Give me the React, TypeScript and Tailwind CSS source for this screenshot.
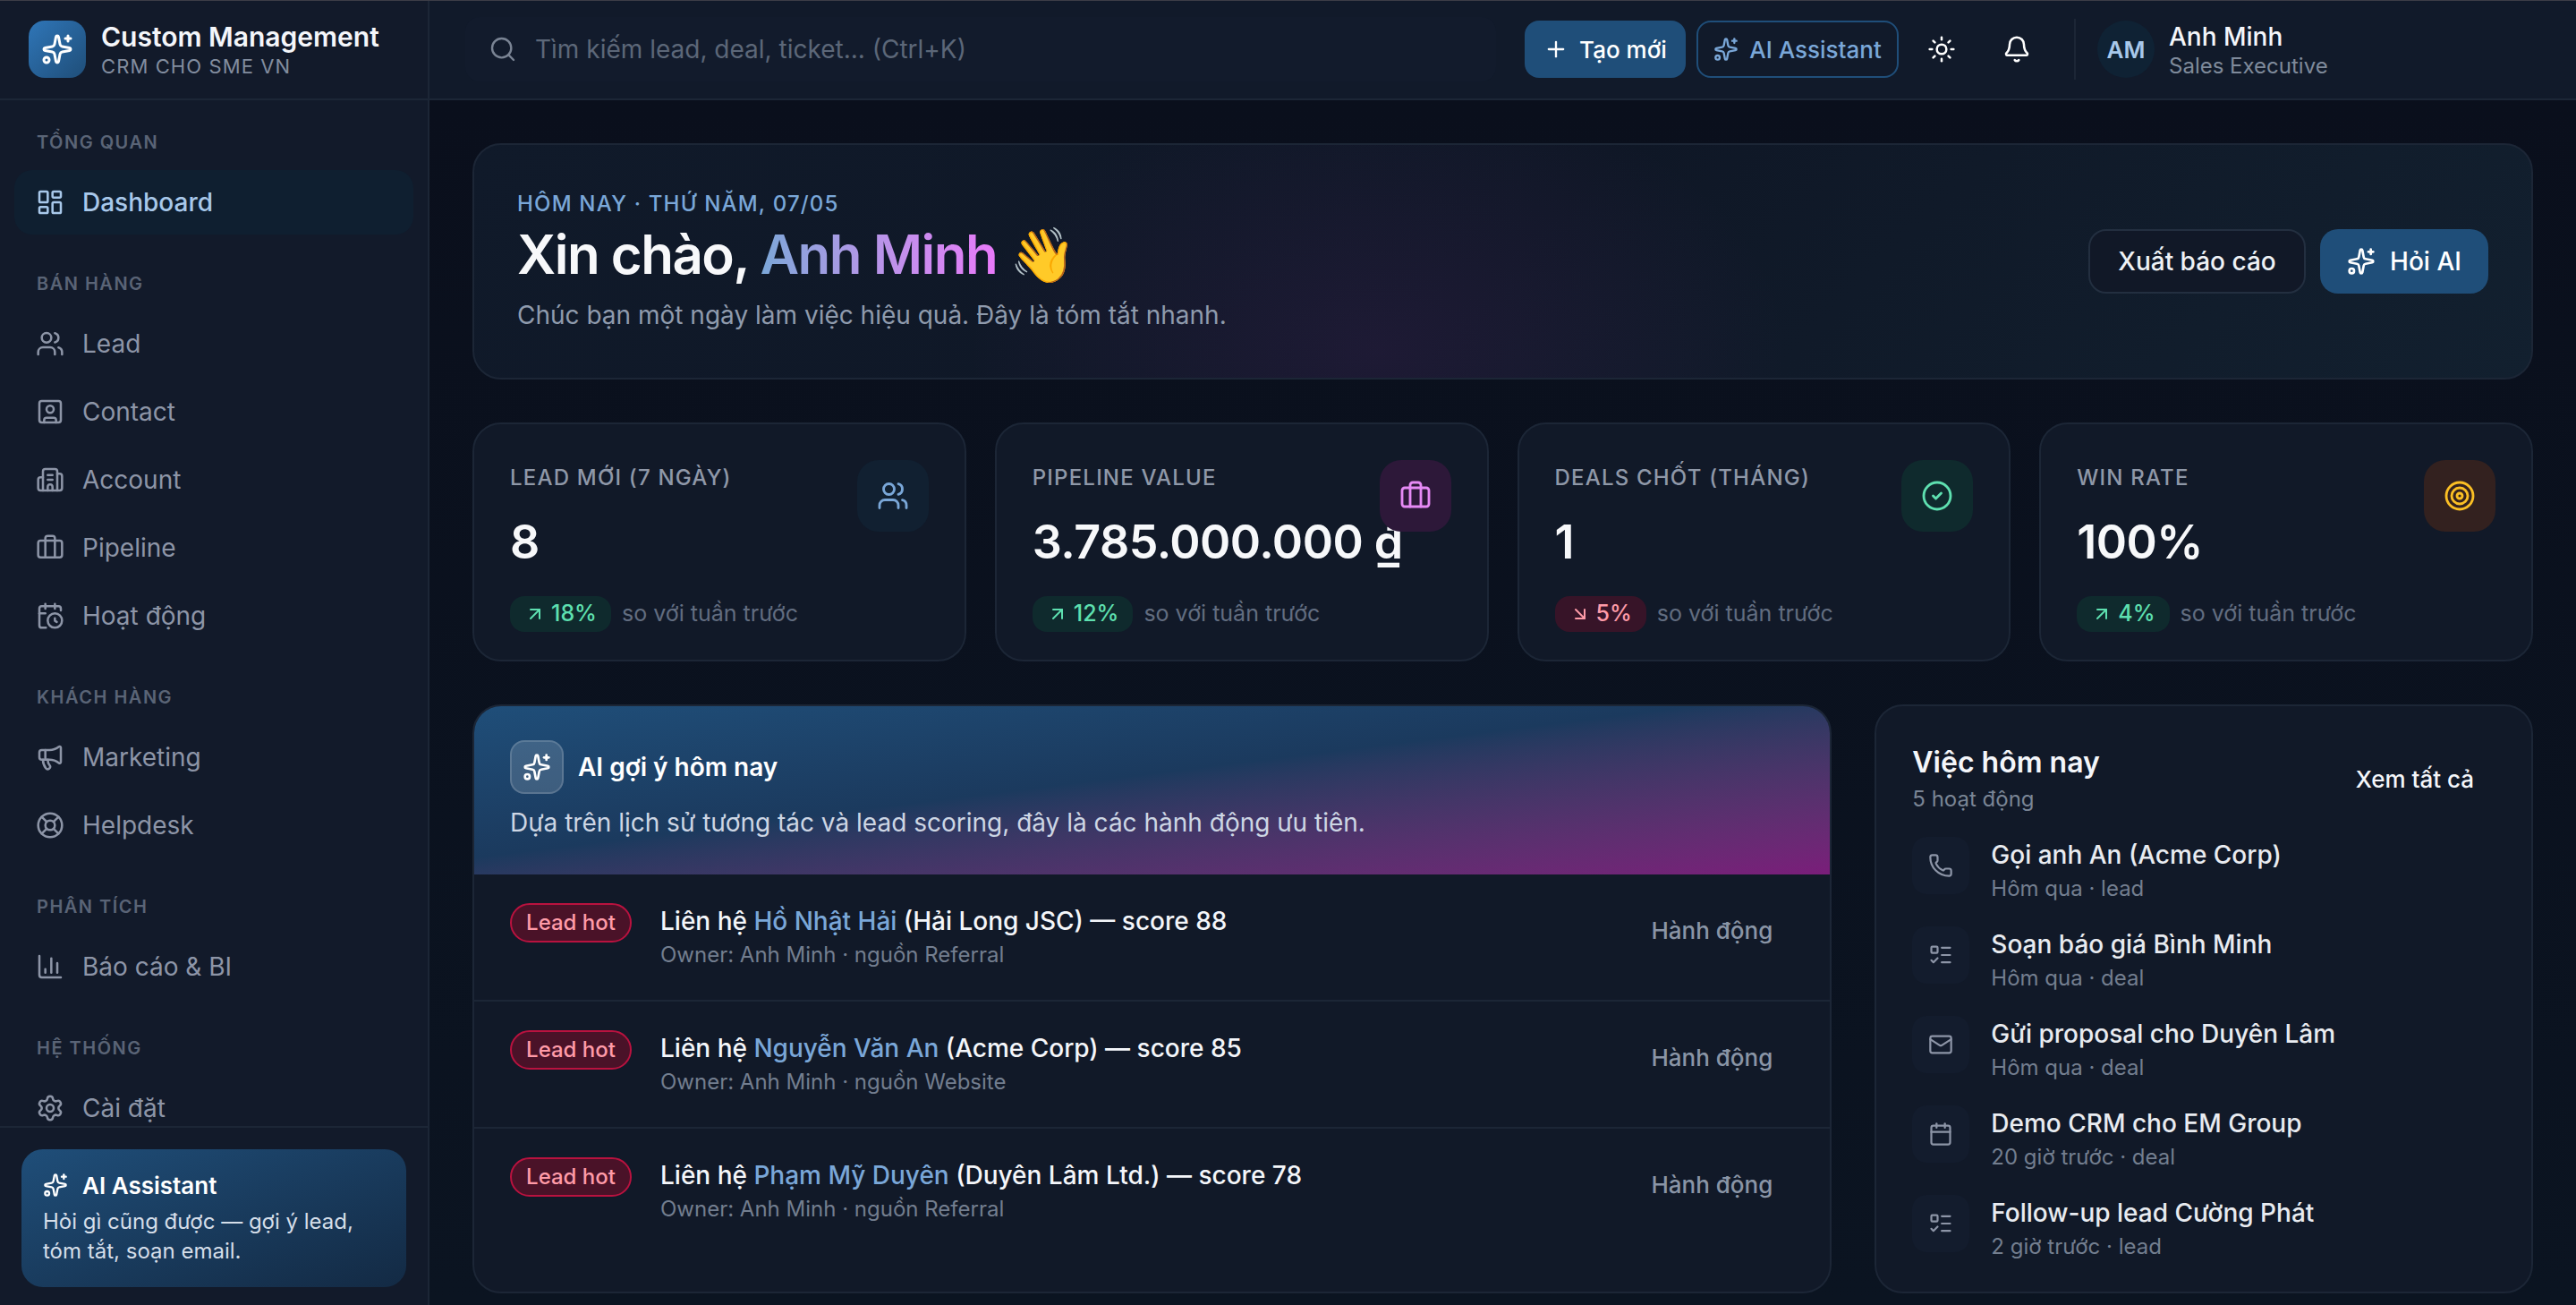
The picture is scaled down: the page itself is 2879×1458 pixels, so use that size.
import {
  ArrowDownRight,
  ArrowUpRight,
  Bell,
  Briefcase,
  Building2,
  Calendar,
  CalendarClock,
  ChartColumn,
  CircleCheck,
  LayoutDashboard,
  LifeBuoy,
  ListTodo,
  Mail,
  Megaphone,
  Phone,
  Plus,
  Search,
  Settings,
  Sparkles,
  SquareUser,
  Sun,
  Target,
  Users,
} from 'lucide-react';

const scrollbar =
  '[&::-webkit-scrollbar]:w-5 [&::-webkit-scrollbar-track]:bg-transparent [&::-webkit-scrollbar-thumb]:rounded-full [&::-webkit-scrollbar-thumb]:border-4 [&::-webkit-scrollbar-thumb]:border-solid [&::-webkit-scrollbar-thumb]:border-transparent [&::-webkit-scrollbar-thumb]:bg-[#263850] [&::-webkit-scrollbar-thumb]:bg-clip-padding';

const navGroups = [
  { label: 'Tổng quan', items: [{ name: 'Dashboard', icon: LayoutDashboard, active: true }] },
  {
    label: 'Bán hàng',
    items: [
      { name: 'Lead', icon: Users },
      { name: 'Contact', icon: SquareUser },
      { name: 'Account', icon: Building2 },
      { name: 'Pipeline', icon: Briefcase },
      { name: 'Hoạt động', icon: CalendarClock },
    ],
  },
  {
    label: 'Khách hàng',
    items: [
      { name: 'Marketing', icon: Megaphone },
      { name: 'Helpdesk', icon: LifeBuoy },
    ],
  },
  { label: 'Phân tích', items: [{ name: 'Báo cáo & BI', icon: ChartColumn }] },
  { label: 'Hệ thống', items: [{ name: 'Cài đặt', icon: Settings }] },
];

const stats = [
  { label: 'Lead mới (7 ngày)', value: '8', delta: '18%', up: true, icon: Users, box: 'bg-[#112031] text-[#7aa7d8]' },
  { label: 'Pipeline value', value: '3.785.000.000 ₫', delta: '12%', up: true, icon: Briefcase, box: 'bg-[#2d1839] text-[#e68af5]' },
  { label: 'Deals chốt (tháng)', value: '1', delta: '5%', up: false, icon: CircleCheck, box: 'bg-[#0f2a2d] text-[#5ee0b0]' },
  { label: 'Win rate', value: '100%', delta: '4%', up: true, icon: Target, box: 'bg-[#33211f] text-[#fbbf24]' },
];

const suggestions = [
  { name: 'Hồ Nhật Hải', company: '(Hải Long JSC) — score 88', source: 'Referral' },
  { name: 'Nguyễn Văn An', company: '(Acme Corp) — score 85', source: 'Website' },
  { name: 'Phạm Mỹ Duyên', company: '(Duyên Lâm Ltd.) — score 78', source: 'Referral' },
];

const tasks = [
  { title: 'Gọi anh An (Acme Corp)', meta: 'Hôm qua · lead', icon: Phone },
  { title: 'Soạn báo giá Bình Minh', meta: 'Hôm qua · deal', icon: ListTodo },
  { title: 'Gửi proposal cho Duyên Lâm', meta: 'Hôm qua · deal', icon: Mail },
  { title: 'Demo CRM cho EM Group', meta: '20 giờ trước · deal', icon: Calendar },
  { title: 'Follow-up lead Cường Phát', meta: '2 giờ trước · lead', icon: ListTodo },
];

function Sidebar() {
  return (
    <aside className="flex h-full w-[480px] shrink-0 flex-col border-r-2 border-[#1c2636] bg-[#121a2a]">
      <div className="flex h-[112px] shrink-0 items-center gap-[17px] border-b-2 border-[#1c2636] px-8">
        <div className="flex h-16 w-16 items-center justify-center rounded-[18px] bg-linear-to-br from-[#2f76b8] to-[#1f4e79]">
          <Sparkles size={36} strokeWidth={2} className="text-white" />
        </div>
        <div>
          <div className="text-[30px] leading-[38px] font-semibold text-[#f4f6fa]">Custom Management</div>
          <div className="text-[22px] leading-[28px] tracking-[1.1px] text-[#828d9f]">CRM CHO SME VN</div>
        </div>
      </div>

      <nav className={`min-h-0 flex-1 overflow-y-scroll px-4 pt-8 pb-6 ${scrollbar}`}>
        {navGroups.map((group, i) => (
          <div key={group.label} className={i > 0 ? 'mt-10' : ''}>
            <div className="mb-4 px-[25px] text-[20px] leading-[30px] font-semibold tracking-[1.5px] text-[#5a6476] uppercase">
              {group.label}
            </div>
            <div className="flex flex-col gap-1">
              {group.items.map((item) => (
                <div
                  key={item.name}
                  className={`flex h-[72px] items-center gap-5 rounded-[20px] px-6 text-[28px] ${
                    'active' in item ? 'bg-[#0f1f30] font-medium text-[#a8c8ea]' : 'text-[#8d95a7]'
                  }`}
                >
                  <item.icon size={32} strokeWidth={1.9} className="shrink-0" />
                  {item.name}
                </div>
              ))}
            </div>
          </div>
        ))}
      </nav>

      <div className="shrink-0 border-t-2 border-[#1c2636] px-6 pt-6 pb-5">
        <div className="h-[154px] rounded-[24px] bg-linear-to-br from-[#1f4e79] to-[#132a44] p-6">
          <div className="flex h-8 items-center gap-4 text-[26px] font-semibold text-white">
            <Sparkles size={28} />
            AI Assistant
          </div>
          <p className="mt-2 text-[24px] leading-[33px] text-[#d5dee9]">
            Hỏi gì cũng được — gợi ý lead, tóm tắt, soạn email.
          </p>
        </div>
      </div>
    </aside>
  );
}

function Topbar() {
  return (
    <header className="flex h-[112px] shrink-0 items-center border-b-2 border-[#1c2636] bg-[#111a2a] pl-10">
      <div className="flex h-[72px] w-[1152px] shrink-0 items-center gap-5 rounded-2xl bg-[#121b2c] px-[26px] text-[28px] text-[#5c6778]">
        <Search size={32} strokeWidth={1.8} className="shrink-0 text-[#7a8494]" />
        Tìm kiếm lead, deal, ticket... (Ctrl+K)
      </div>
      <div className="ml-8 flex items-center gap-3">
        <button className="flex h-16 w-[180px] items-center justify-center gap-3 rounded-2xl bg-[#1f4e79] text-[26px] font-medium text-white">
          <Plus size={28} />
          Tạo mới
        </button>
        <button className="flex h-16 w-[226px] items-center justify-center gap-3 rounded-2xl border-2 border-[#1f4e79] text-[26px] font-medium text-[#7aa7d8]">
          <Sparkles size={28} />
          AI Assistant
        </button>
        <button className="flex h-[72px] w-[72px] items-center justify-center text-white">
          <Sun size={32} strokeWidth={1.9} />
        </button>
        <button className="flex h-[72px] w-[72px] items-center justify-center text-white">
          <Bell size={32} strokeWidth={1.9} />
        </button>
      </div>
      <div className="ml-7 flex h-[68px] items-center gap-4 border-l-2 border-[#1c2636] pl-6">
        <div className="flex h-16 w-16 items-center justify-center rounded-full bg-[#0f2234] text-[26px] font-semibold text-[#a8c8ea]">
          AM
        </div>
        <div>
          <div className="text-[28px] leading-[38px] font-medium text-[#f4f6fa]">Anh Minh</div>
          <div className="text-[24px] leading-[28px] text-[#7f8a9b]">Sales Executive</div>
        </div>
      </div>
    </header>
  );
}

function Hero() {
  return (
    <section className="flex h-[264px] items-center justify-between rounded-[32px] border-2 border-[#1c2636] bg-[radial-gradient(ellipse_460px_300px_at_1010px_230px,rgba(150,50,170,0.11),transparent),linear-gradient(135deg,#101a2a,#0f1726_50%,#12202f)] px-12">
      <div>
        <div className="text-[24px] leading-[32px] font-medium tracking-[1.2px] text-[#7aa7d8] uppercase">
          Hôm nay · Thứ Năm, 07/05
        </div>
        <h1 className="mt-1 text-[60px] leading-[72px] font-semibold tracking-[-1.5px] text-[#f7f8fa]">
          Xin chào,{' '}
          <span className="bg-linear-to-r from-[#7aa7d8] to-[#e879f9] bg-clip-text text-transparent">Anh Minh</span>{' '}
          <span>👋</span>
        </h1>
        <p className="mt-3 text-[28px] leading-[40px] text-[#8f9bad]">
          Chúc bạn một ngày làm việc hiệu quả. Đây là tóm tắt nhanh.
        </p>
      </div>
      <div className="flex items-center gap-4">
        <button className="h-[72px] w-[243px] rounded-[20px] border-2 border-[#232f40] bg-[#111827] text-[28px] font-medium text-[#eef1f5]">
          Xuất báo cáo
        </button>
        <button className="flex h-[72px] w-[188px] items-center justify-center gap-4 rounded-[20px] bg-[#1f4e79] text-[28px] font-medium text-white">
          <Sparkles size={32} />
          Hỏi AI
        </button>
      </div>
    </section>
  );
}

function StatCard({ stat }: { stat: (typeof stats)[number] }) {
  const Arrow = stat.up ? ArrowUpRight : ArrowDownRight;
  return (
    <div className="relative h-[267px] rounded-[32px] border-2 border-[#1c2636] bg-[#111928] px-10 pt-10">
      <div className="flex h-10 items-center text-[24px] font-medium tracking-[1.2px] text-[#8f98a8] uppercase">
        {stat.label}
      </div>
      <div className="mt-[18px] text-[52px] leading-[68px] font-semibold tracking-[-0.5px] whitespace-nowrap text-[#f7f8fa]">
        {stat.value}
      </div>
      <div className="mt-[26px] flex items-center gap-3">
        <span
          className={`flex h-10 items-center gap-1.5 rounded-[16px] px-4 text-[25px] font-medium ${
            stat.up ? 'bg-[#0f2a2d] text-[#5ee0b0]' : 'bg-[#371428] text-[#ff9ba8]'
          }`}
        >
          <Arrow size={24} />
          {stat.delta}
        </span>
        <span className="text-[25px] text-[#626d80]">so với tuần trước</span>
      </div>
      <div className={`absolute top-10 right-10 flex h-20 w-20 items-center justify-center rounded-[24px] ${stat.box}`}>
        <stat.icon size={36} strokeWidth={1.9} />
      </div>
    </div>
  );
}

function AiPanel() {
  return (
    <section className="col-span-2 overflow-hidden rounded-[32px] border-2 border-[#1c2636] bg-[#111928]">
      <div className="h-[188px] bg-linear-to-br from-[#1f4e79] via-[#1b3a5e] via-45% to-[#7a1d7a] px-10 pt-[38px]">
        <div className="flex items-center gap-4">
          <div className="flex h-[60px] w-[60px] items-center justify-center rounded-2xl border-2 border-white/15 bg-white/15 text-white">
            <Sparkles size={32} />
          </div>
          <div className="text-[28px] font-semibold text-white">AI gợi ý hôm nay</div>
        </div>
        <p className="mt-3 text-[28px] leading-[40px] text-[#cdd6e4]">
          Dựa trên lịch sử tương tác và lead scoring, đây là các hành động ưu tiên.
        </p>
      </div>
      {suggestions.map((s, i) => (
        <div key={s.name} className={`flex items-start gap-8 px-10 pt-8 ${i < 2 ? 'h-[142px] border-b-2 border-[#1c2636]' : 'h-[142px]'}`}>
          <span className="flex h-11 w-[136px] shrink-0 items-center justify-center rounded-full border-2 border-[#b9123f] bg-[#4a1228] text-[24px] font-medium text-[#ff9ba8]">
            Lead hot
          </span>
          <div className="min-w-0 flex-1">
            <div className="text-[28px] leading-[40px] font-medium text-[#f4f6fa]">
              Liên hệ <span className="text-[#7aa7d8]">{s.name}</span> {s.company}
            </div>
            <div className="text-[24px] leading-[36px] text-[#737e8f]">Owner: Anh Minh · nguồn {s.source}</div>
          </div>
          <button className="mt-[13px] mr-6 text-[26px] leading-[36px] font-medium text-[#8a95a6]">Hành động</button>
        </div>
      ))}
    </section>
  );
}

function TasksPanel() {
  return (
    <section className="rounded-[32px] border-2 border-[#1c2636] bg-[#111928] p-10 pb-8">
      <div className="flex items-start justify-between">
        <div>
          <h2 className="text-[32px] leading-[46px] font-semibold text-[#f4f6fa]">Việc hôm nay</h2>
          <p className="text-[24px] leading-[36px] text-[#7a8595]">5 hoạt động</p>
        </div>
        <button className="mt-[24px] mr-6 text-[26px] leading-[36px] font-medium text-[#f4f6fa]">Xem tất cả</button>
      </div>
      <div className="mt-[24px] flex flex-col gap-6">
        {tasks.map((t) => (
          <div key={t.title} className="flex items-start gap-6">
            <div className="flex h-16 w-16 shrink-0 items-center justify-center rounded-2xl bg-[#131c2d] text-[#8d95a7]">
              <t.icon size={28} strokeWidth={1.9} />
            </div>
            <div>
              <div className="text-[28px] leading-[40px] font-medium text-[#e8ebf0]">{t.title}</div>
              <div className="text-[24px] leading-[36px] text-[#737e8f]">{t.meta}</div>
            </div>
          </div>
        ))}
      </div>
    </section>
  );
}

export default function App() {
  return (
    <div className="relative flex h-screen overflow-hidden bg-[#0b121f] font-['Inter',sans-serif]">
      <div className="absolute inset-x-0 top-0 z-10 h-px bg-[#3d3d47]" />
      <Sidebar />
      <div className="flex min-w-0 flex-1 flex-col">
        <Topbar />
        <main className={`min-h-0 flex-1 overflow-y-scroll bg-linear-to-b from-[#0a0f1c] to-[#0b1421] ${scrollbar}`}>
          <div className="min-h-[2214px] p-12">
            <Hero />
            <div className="mt-12 grid grid-cols-4 gap-8">
              {stats.map((s) => (
                <StatCard key={s.label} stat={s} />
              ))}
            </div>
            <div className="mt-12 grid grid-cols-3 gap-12">
              <AiPanel />
              <TasksPanel />
            </div>
          </div>
        </main>
      </div>
    </div>
  );
}
